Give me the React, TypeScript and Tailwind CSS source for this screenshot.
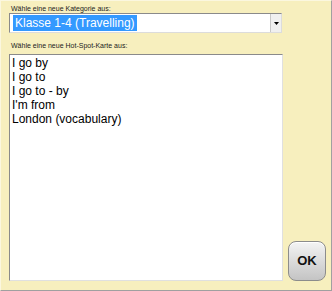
import React from "react";

const items = ["I go by", "I go to", "I go to - by", "I'm from", "London (vocabulary)"];

export default function App() {
  return (
    <div
      className="w-[332px] h-[291px] bg-[#f7efbe] border-r border-b border-[#a0a0a0] border-t border-l border-t-[#fbf7df] border-l-[#fbf7df] flex flex-col"
      style={{ fontFamily: '"Liberation Sans", Arial, sans-serif' }}
    >
      <div className="pl-[10px] pt-[3px] text-[7px] leading-[9px] text-[#222]">Wähle eine neue Kategorie aus:</div>
      <div className="ml-[8px] w-[273px] h-[20px] bg-white border border-t-[#8a8a8a] border-l-[#8a8a8a] border-r-[#dcdcdc] border-b-[#dcdcdc] flex items-center">
        <div className="flex-1 flex items-center pl-[3px]">
          <span className="bg-[#3399ff] text-white text-[12px] leading-[16px] px-[2px]">Klasse 1-4 (Travelling)</span>
        </div>
        <div className="w-[11px] h-[18px] bg-[#f0f0f0] border-l border-[#c8c8c8] flex items-center justify-center">
          <svg width="5" height="3" viewBox="0 0 5 3"><path d="M0 0h5L2.5 3z" fill="#000" /></svg>
        </div>
      </div>
      <div className="pl-[10px] pt-[8px] text-[7px] leading-[9px] text-[#222]">Wähle eine neue Hot-Spot-Karte aus:</div>
      <div className="flex flex-1 mt-[4px] mb-[9px]">
        <div className="ml-[8px] w-[274px] bg-white border border-t-[#8a8a8a] border-l-[#8a8a8a] border-r-[#e0e0e0] border-b-[#e0e0e0] pt-[1px] pl-[2px] text-[12px] leading-[14px] text-black">
          {items.map((t) => (
            <div key={t}>{t}</div>
          ))}
        </div>
        <div className="flex-1 flex items-end justify-center">
          <button className="w-[38px] h-[40px] rounded-[8px] border border-[#8c8c8c] bg-gradient-to-b from-[#f4f4f4] to-[#c4c4c4] text-[13px] font-bold text-[#111] shadow-[inset_0_1px_0_#ffffff]">
            OK
          </button>
        </div>
      </div>
    </div>
  );
}
